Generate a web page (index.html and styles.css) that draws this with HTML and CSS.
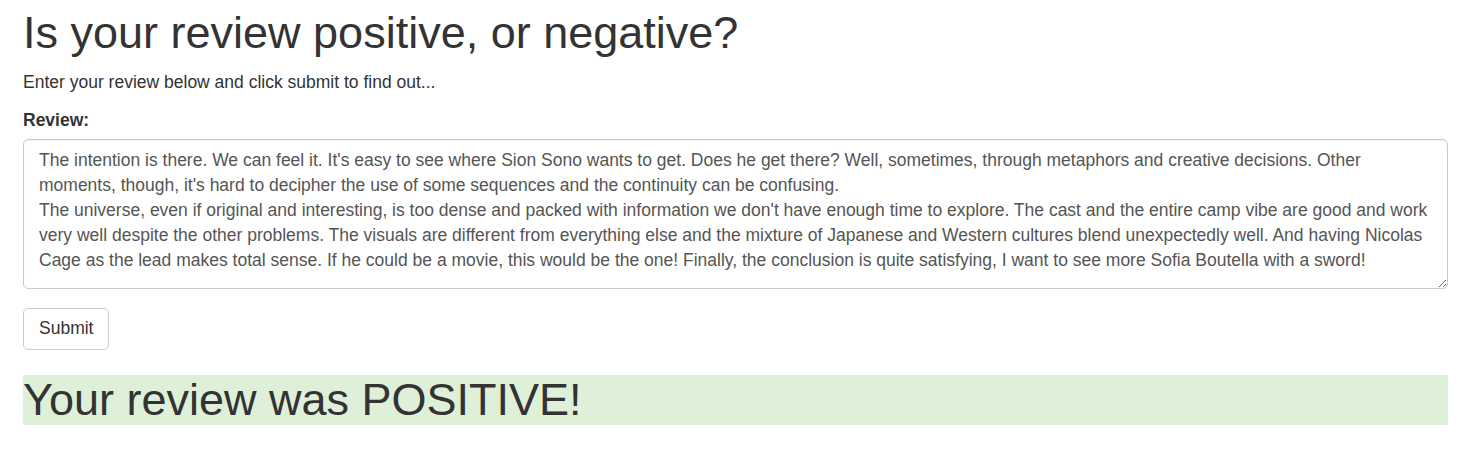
FILE: index.html
```html
<!DOCTYPE html>
<html>
<head>
<meta charset="utf-8">
<title>Review sentiment</title>
<link rel="stylesheet" href="styles.css">
</head>
<body>
<div class="page">
  <h1 class="title">Is your review positive, or negative?</h1>
  <p class="intro">Enter your review below and click submit to find out...</p>
  <form class="form">
    <div class="form-group">
      <label class="label" for="review">Review:</label>
      <textarea class="review" id="review">The intention is there. We can feel it. It's easy to see where Sion Sono wants to get. Does he get there? Well, sometimes, through metaphors and creative decisions. Other moments, though, it's hard to decipher the use of some sequences and the continuity can be confusing.
The universe, even if original and interesting, is too dense and packed with information we don't have enough time to explore. The cast and the entire camp vibe are good and work very well despite the other problems. The visuals are different from everything else and the mixture of Japanese and Western cultures blend unexpectedly well. And having Nicolas Cage as the lead makes total sense. If he could be a movie, this would be the one! Finally, the conclusion is quite satisfying, I want to see more Sofia Boutella with a sword!</textarea>
    </div>
    <button type="button" class="btn">Submit</button>
  </form>
  <h1 class="result">Your review was POSITIVE!</h1>
</div>
</body>
</html>
```

FILE: styles.css
```css
* { box-sizing: border-box; }
html, body { margin: 0; padding: 0; background: #fff; }
body {
  font-family: "Liberation Sans", Arial, Helvetica, sans-serif;
  font-size: 17.5px;
  line-height: 25px;
  color: #333;
}
.page {
  padding: 8px 34px 0 23px;
}
.title, .result {
  font-family: "Liberation Sans", Arial, Helvetica, sans-serif;
  font-weight: 500;
  font-size: 45px;
  line-height: 49.5px;
  margin: 0 0 12.5px 0;
}
.intro {
  margin: 0 0 12.5px 0;
}
.form { margin: 0; }
.form-group { margin-bottom: 18.75px; }
.label {
  display: inline-block;
  font-weight: bold;
  margin-bottom: 6.25px;
  max-width: 100%;
}
.review {
  display: block;
  width: 100%;
  height: 150px;
  padding: 8.5px 15px 6.5px 15px;
  font-family: inherit;
  font-size: 17.5px;
  line-height: 25px;
  color: #555;
  background: #fff;
  border: 1px solid #ccc;
  border-radius: 5px;
  box-shadow: inset 0 1px 1px rgba(0,0,0,.075);
  resize: vertical;
  margin: 0;
}
.btn {
  display: inline-block;
  font-family: inherit;
  font-size: 17.5px;
  line-height: 25px;
  padding: 7.5px 15px;
  color: #333;
  background: #fff;
  border: 1px solid #ccc;
  border-radius: 5px;
  margin: 0;
  cursor: pointer;
}
.result {
  margin-top: 25px;
  line-height: 50px;
  background: #dff0d8;
}
```
